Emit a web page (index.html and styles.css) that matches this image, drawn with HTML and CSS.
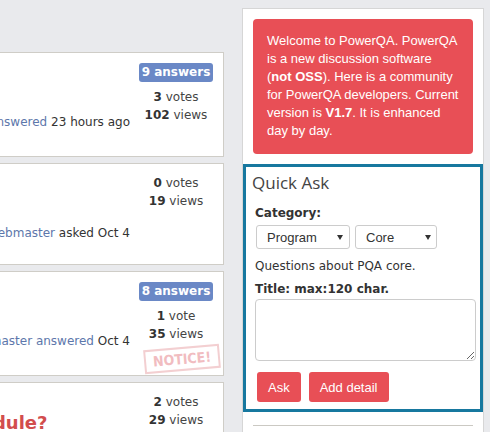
FILE: index.html
```html
<!DOCTYPE html>
<html lang="en">
<head>
<meta charset="utf-8">
<title>PowerQA</title>
<link rel="stylesheet" href="styles.css">
</head>
<body>
<div class="page">
  <main class="main">
    <div class="card">
      <div class="q">
        <h2 class="q-title"><a href="#">How to use PowerQA?</a></h2>
        <div class="q-meta">asked by <a href="#">admin</a>, <a href="#">webmaster</a> <a href="#">answered</a> 23 hours ago</div>
      </div>
      <div class="stats">
        <span class="badge">9 answers</span>
        <div class="stat"><b>3</b> votes</div>
        <div class="stat"><b>102</b> views</div>
      </div>
    </div>
    <div class="card card-short">
      <div class="q">
        <h2 class="q-title"><a href="#">Login error</a></h2>
        <div class="q-meta"><a href="#">webmaster</a> asked Oct 4</div>
      </div>
      <div class="stats">
        <div class="stat"><b>0</b> votes</div>
        <div class="stat"><b>19</b> views</div>
      </div>
    </div>
    <div class="card">
      <div class="q">
        <h2 class="q-title"><a href="#">Release notes</a></h2>
        <div class="q-meta"><a href="#">webmaster</a> <a href="#">answered</a> Oct 4</div>
      </div>
      <div class="stats">
        <span class="badge">8 answers</span>
        <div class="stat"><b>1</b> vote</div>
        <div class="stat"><b>35</b> views</div>
      </div>
      <div class="stamp">NOTICE!</div>
    </div>
    <div class="card">
      <div class="q">
        <h2 class="q-title q-title-red"><a href="#">How to make a plugin module?</a></h2>
        <div class="q-meta"><a href="#">webmaster</a> asked Oct 3</div>
      </div>
      <div class="stats">
        <div class="stat"><b>2</b> votes</div>
        <div class="stat"><b>29</b> views</div>
      </div>
    </div>
  </main>
  <aside class="sidebar">
    <div class="welcome">Welcome to PowerQA. PowerQA is a new discussion software (<b>not OSS</b>). Here is a community for PowerQA developers. Current version is <b>V1.7</b>. It is enhanced day by day.</div>
    <form class="quick-ask">
      <h3 class="qa-title">Quick Ask</h3>
      <div class="qa-label">Category:</div>
      <div class="selects">
        <span class="select select-wide"><select><option>Program</option></select></span>
        <span class="select select-narrow"><select><option>Core</option></select></span>
      </div>
      <div class="qa-note">Questions about PQA core.</div>
      <div class="qa-label qa-label-title">Title: max:120 char.</div>
      <textarea class="qa-text"></textarea>
      <div class="buttons">
        <button type="button" class="btn">Ask</button>
        <button type="button" class="btn">Add detail</button>
      </div>
    </form>
    <hr class="divider">
  </aside>
</div>
</body>
</html>
```
FILE: styles.css
```css
html, body {
  margin: 0;
  padding: 0;
}
body {
  background: #e9eaed;
  font-family: "DejaVu Sans", Verdana, sans-serif;
  font-size: 12px;
  color: #333;
  overflow: hidden;
}
.page {
  display: flex;
  align-items: flex-start;
}
.main {
  flex: 0 0 auto;
  width: 500px;
  margin-left: -276px;
  margin-top: 52px;
}
.card {
  position: relative;
  display: flex;
  box-sizing: border-box;
  height: 105px;
  margin-bottom: 6px;
  padding: 10px 4px 10px 10px;
  background: #fff;
  border: 1px solid #cfcdc7;
}
.card-short {
  height: 102px;
}
.q {
  flex: 1;
  padding-top: 18px;
  min-width: 0;
}
.q-title {
  margin: 0;
  font-size: 18px;
  line-height: 24px;
  font-weight: bold;
  white-space: nowrap;
}
.q-title a {
  color: #2f4f8a;
  text-decoration: none;
}
.q-title-red a {
  color: #d24d4d;
}
.q-meta {
  margin-top: 8px;
  line-height: 18px;
  text-align: right;
  padding-right: 3px;
  white-space: nowrap;
}
.q-meta a {
  color: #5d77ab;
  text-decoration: none;
}
.stats {
  flex: 0 0 86px;
  text-align: center;
  color: #444;
}
.badge {
  display: inline-block;
  height: 19px;
  line-height: 19px;
  padding: 0 3px;
  margin-bottom: 6px;
  border-radius: 3px;
  background: #6a88c6;
  color: #fff;
  font-weight: bold;
}
.stat {
  line-height: 18px;
}
.stat b {
  color: #333;
}
.stamp {
  position: absolute;
  right: 3px;
  bottom: 4px;
  width: 72px;
  height: 20px;
  border: 2px solid #f3cfd1;
  color: #f1bcc0;
  font-family: "DejaVu Sans Condensed", "Liberation Sans Narrow", "DejaVu Sans", sans-serif;
  font-weight: bold;
  font-size: 14px;
  line-height: 20px;
  text-align: center;
  transform: rotate(-5deg);
  letter-spacing: 0;
}
.sidebar {
  flex: 0 0 242px;
  box-sizing: border-box;
  width: 242px;
  margin-left: 18px;
  margin-top: 8px;
  min-height: 460px;
  padding-top: 10px;
  background: #fff;
  border: 1px solid #d6d6d6;
}
.welcome {
  margin: 0 10px;
  padding: 13px 14px 14px;
  background: #e84f56;
  color: #fff;
  border-radius: 4px;
  font-family: "Liberation Sans", Arial, sans-serif;
  font-size: 13px;
  line-height: 18px;
}
.quick-ask {
  margin: 10px 0 0;
  padding: 0 3px 7px 9px;
  border: 3px solid #17789f;
}
.qa-title {
  margin: 4px 0 0 -3px;
  font-family: "Open Sans", sans-serif;
  font-weight: normal;
  font-size: 17px;
  line-height: 24px;
  color: #444;
}
.qa-label {
  margin-top: 9px;
  font-weight: bold;
  line-height: 18px;
  color: #333;
}
.qa-label-title {
  margin-top: 5px;
}
.selects {
  display: flex;
  gap: 5px;
  margin: 3px 0 0 1px;
}
.select {
  position: relative;
  display: block;
}
.select select {
  display: block;
  appearance: none;
  -webkit-appearance: none;
  box-sizing: border-box;
  height: 24px;
  margin: 0;
  padding: 0 0 0 10px;
  border: 1px solid #cccccc;
  border-radius: 3px;
  background: #fff;
  font-family: "Liberation Sans", Arial, sans-serif;
  font-size: 13px;
  color: #333;
}
.select-wide select {
  width: 94px;
}
.select-narrow select {
  width: 82px;
}
.select::after {
  content: "";
  position: absolute;
  top: 10px;
  right: 7px;
  border-left: 3px solid transparent;
  border-right: 3px solid transparent;
  border-top: 5px solid #333;
  pointer-events: none;
}
.select-narrow::after {
  right: 6px;
}
.qa-note {
  margin-top: 8px;
  line-height: 18px;
  color: #333;
}
.qa-text {
  display: block;
  box-sizing: border-box;
  width: 221px;
  height: 62px;
  margin: 1px 0 0;
  border: 1px solid #cccccc;
  border-radius: 4px;
  resize: vertical;
}
.buttons {
  display: flex;
  gap: 8px;
  margin: 11px 0 0 2px;
}
.btn {
  height: 30px;
  padding: 0 11px;
  border: 0;
  border-radius: 3px;
  background: #e84f56;
  color: #fff;
  font-family: "Liberation Sans", Arial, sans-serif;
  font-size: 13px;
}
.divider {
  margin: 13px 10px 0;
  border: 0;
  border-top: 1px solid #cbc9c3;
}
```
